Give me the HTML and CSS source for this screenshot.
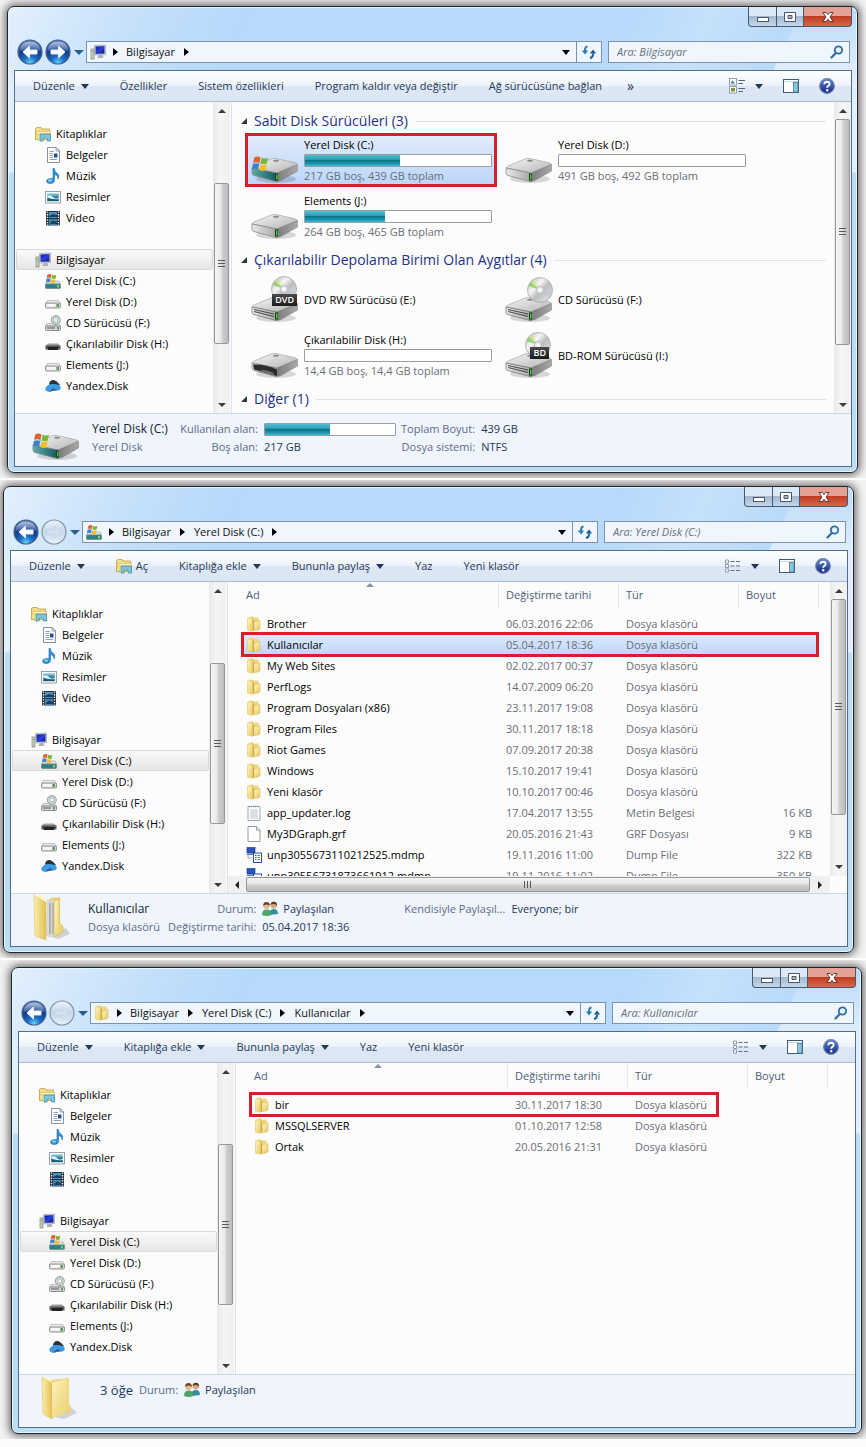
FILE: index.html
```html
<!DOCTYPE html>
<html lang="tr">
<head>
<meta charset="utf-8">
<meta name="viewport" content="width=device-width, initial-scale=1">
<title>Bilgisayar</title>
<link rel="stylesheet" href="styles.css">
</head>
<body>
<svg class="sprite" aria-hidden="true">
  <defs>
    <linearGradient id="g-top" x1="0" y1="0" x2="1" y2="1"><stop offset="0" stop-color="#f6f6f6"/><stop offset="1" stop-color="#b4b4b4"/></linearGradient>
    <linearGradient id="g-front" x1="0" y1="0" x2="1" y2="0"><stop offset="0" stop-color="#e9e9e9"/><stop offset="1" stop-color="#a5a5a5"/></linearGradient>
    <linearGradient id="g-teal" x1="0" y1="0" x2="1" y2="0"><stop offset="0" stop-color="#5fa9a8"/><stop offset="1" stop-color="#14585f"/></linearGradient>
    <linearGradient id="g-side" x1="0" y1="0" x2="1" y2="0"><stop offset="0" stop-color="#7b7b7b"/><stop offset="1" stop-color="#a9a9a9"/></linearGradient>
    <linearGradient id="g-disc" x1="0" y1="0" x2="1" y2="1"><stop offset="0" stop-color="#a9a9a9"/><stop offset=".35" stop-color="#f6f6f6"/><stop offset=".55" stop-color="#bdbdbd"/><stop offset="1" stop-color="#efefef"/></linearGradient>
    <linearGradient id="g-fold" x1="0" y1="0" x2="1" y2="0"><stop offset="0" stop-color="#fbeea9"/><stop offset="1" stop-color="#e2bf55"/></linearGradient>
    <linearGradient id="g-fold2" x1="0" y1="0" x2="1" y2="1"><stop offset="0" stop-color="#fff6c4"/><stop offset="1" stop-color="#e8c95f"/></linearGradient>
    <linearGradient id="g-screen" x1="0" y1="0" x2="1" y2="1"><stop offset="0" stop-color="#0717a6"/><stop offset=".5" stop-color="#2c41d8"/><stop offset="1" stop-color="#0a1378"/></linearGradient>
    <radialGradient id="g-ball" cx=".5" cy=".95" r=".9"><stop offset="0" stop-color="#5fd6ff"/><stop offset=".3" stop-color="#1f6fc4"/><stop offset=".65" stop-color="#143c8c"/><stop offset="1" stop-color="#4d74b5"/></radialGradient>
    <linearGradient id="g-shine" x1="0" y1="0" x2="0" y2="1"><stop offset="0" stop-color="#fff" stop-opacity=".85"/><stop offset="1" stop-color="#fff" stop-opacity=".15"/></linearGradient>
    <linearGradient id="g-pale" x1="0" y1="0" x2="0" y2="1"><stop offset="0" stop-color="#eef5fc"/><stop offset=".5" stop-color="#c3d5e8"/><stop offset="1" stop-color="#e8f3fc"/></linearGradient>
    <linearGradient id="g-help" x1="0" y1="0" x2="0" y2="1"><stop offset="0" stop-color="#5f84d6"/><stop offset="1" stop-color="#13277c"/></linearGradient>
    <linearGradient id="g-sea" x1="0" y1="0" x2="0" y2="1"><stop offset="0" stop-color="#9fd8ec"/><stop offset=".5" stop-color="#2a7f96"/><stop offset="1" stop-color="#175266"/></linearGradient>
  </defs>

  <symbol id="flag" viewBox="0 0 16 16">
    <path d="M2 2.500C4 1 6 1.300 8 2.300L7 7.500C5 6.500 3 6.400 1 7.500Z" fill="#e2622b"/>
    <path d="M9 2.600C11 3.600 13 3.600 15 2.600L14 8C12 9 10 8.800 8 7.800Z" fill="#7cb53c"/>
    <path d="M.8 8.500C3 7.400 5 7.500 6.800 8.500L5.800 13.600C4 12.600 2 12.600 0 13.700Z" fill="#3a82cf"/>
    <path d="M7.800 8.900C10 10 12 9.900 13.800 9L12.800 14.300C11 15.200 9 15 6.800 14Z" fill="#f3be2c"/>
  </symbol>
  <symbol id="drive-body" viewBox="0 0 48 26">
    <ellipse cx="25" cy="21" rx="20" ry="4" fill="#000" opacity=".15"/>
    <path d="M1 10Q1 9 3 8L20 1Q22 0 25 .5L45 5Q47 6 45 7.500L26 15Z" fill="url(#g-top)" stroke="#9b9b9b" stroke-width=".6"/>
    <path d="M26 15L46.500 6.500V13L30 22.500L26 23.500Z" fill="url(#g-side)" stroke="#777" stroke-width=".5"/>
    <ellipse cx="25" cy="2.800" rx="3" ry="1" fill="#888"/>
  </symbol>
  <symbol id="big-drive" viewBox="0 0 48 48">
    <use href="#drive-body" x="0" y="21" width="48" height="26"/>
    <path d="M1 31L26 36V44.500L23 44L3 38.500Q1 38 1 36Z" fill="url(#g-front)" stroke="#858585" stroke-width=".8"/>
    <rect x="24" y="36.500" width="3" height="7" fill="#123c12"/><rect x="25" y="37.500" width="1.500" height="5" fill="#4ccb3c"/>
  </symbol>
  <symbol id="big-os" viewBox="0 0 48 48">
    <use href="#drive-body" x="0" y="21" width="48" height="26"/>
    <path d="M1 31L26 36V44.500L23 44L3 38.500Q1 38 1 36Z" fill="url(#g-teal)" stroke="#858585" stroke-width=".8"/>
    <rect x="24" y="36.500" width="3" height="7" fill="#123c12"/><rect x="25" y="37.500" width="1.500" height="5" fill="#4ccb3c"/>
    <use href="#flag" x="1" y="18" width="17" height="17"/>
  </symbol>
  <symbol id="big-removable" viewBox="0 0 48 48">
    <use href="#drive-body" x="0" y="21" width="48" height="26"/>
    <path d="M1 31L26 36V44.500L23 44L3 38.500Q1 38 1 36Z" fill="url(#g-front)" stroke="#858585" stroke-width=".8"/>
    <path d="M2 32.500Q14 32 26 37.500V44L20 42.500L3 37.500Z" fill="#2c2c2c"/><path d="M8 38.500Q15 36.500 23 41.500V43L20 42.500Z" fill="#6d6d6d"/>
  </symbol>
  <symbol id="slot-drive" viewBox="0 0 48 48">
    <use href="#drive-body" x="0" y="21" width="48" height="26"/>
    <path d="M1 31L26 36V44.500L23 44L3 38.500Q1 38 1 36Z" fill="url(#g-front)" stroke="#757575" stroke-width=".8"/>
    <path d="M3 33.500L23 38M3 35.500L23 40.500" stroke="#444" stroke-width="1"/>
    <rect x="24" y="36.500" width="3" height="7" fill="#123c12"/><rect x="25" y="37.500" width="1.500" height="5" fill="#4ccb3c"/>
  </symbol>
  <symbol id="disc" viewBox="0 0 26 26">
    <circle cx="13" cy="13" r="12.500" fill="url(#g-disc)" stroke="#a0a0a0" stroke-width=".7"/>
    <path d="M13 13L1.500 9L4 5Z" fill="#7fd060" opacity=".8"/><path d="M13 13L4 5L7 2.500Z" fill="#cfe86a" opacity=".6"/>
    <path d="M13 13L24.500 16L22 21Z" fill="#b9c8df" opacity=".8"/>
    <circle cx="13" cy="13" r="3.600" fill="#e4e8ee" stroke="#aaa" stroke-width=".6"/><circle cx="13" cy="13" r="1.500" fill="#fff"/>
  </symbol>
  <symbol id="big-cd" viewBox="0 0 48 48">
    <use href="#slot-drive" width="48" height="48"/><use href="#disc" x="22" y="1" width="26" height="26"/>
  </symbol>
  <symbol id="big-disc" viewBox="0 0 48 48">
    <use href="#slot-drive" width="48" height="48"/><use href="#disc" x="20" y="0" width="26" height="26"/>
  </symbol>

  <symbol id="pc" viewBox="0 0 16 16">
    <rect x="1" y="5" width="3" height="10" fill="#c9ccb8" stroke="#83866f" stroke-width=".7"/><rect x="1.700" y="7" width="1.500" height="1" fill="#4c4"/>
    <path d="M4.500 1.500L15.500 1V10.500L4.500 11Z" fill="#d9dde2" stroke="#8d949e" stroke-width=".6"/>
    <path d="M5.500 2.500L14.500 2V9.500L5.500 10Z" fill="url(#g-screen)"/>
    <path d="M8.500 11H12.500L13.500 14H7.500Z" fill="#aab0b8"/>
  </symbol>
  <symbol id="library" viewBox="0 0 16 16">
    <path d="M.5 2.500L2 1.500H6L7 3H14.500V13.500H.5Z" fill="#f3dd88" stroke="#bf9a3c" stroke-width=".8"/>
    <path d="M2 5.500H15.500V8H2Z" fill="#fff3b9" stroke="#c9aa52" stroke-width=".5"/>
    <path d="M5 8H15.500V15H12.500Q12.500 11.500 10.200 11.500Q8 11.500 8 15H5Z" fill="#7fc4dd" stroke="#3d8aa8" stroke-width=".8"/>
    <path d="M4 9L5 8V15H3Z" fill="#b9d98a"/>
  </symbol>
  <symbol id="doc" viewBox="0 0 16 16">
    <path d="M2.500 .5H11L14.500 4V15.500H2.500Z" fill="#fff" stroke="#7d8794" stroke-width=".9"/>
    <path d="M11 .5V4H14.500Z" fill="#dfe6ee" stroke="#7d8794" stroke-width=".7"/>
    <path d="M4.500 4.500H9M4.500 6.500H8M4.500 8.500H8M4.500 10.500H8M4.500 12.500H12" stroke="#7d97b8" stroke-width=".9"/><rect x="9" y="6.500" width="3.500" height="4" fill="#274f92"/>
  </symbol>
  <symbol id="music" viewBox="0 0 16 16">
    <path d="M8 .5H9.500Q9.500 4 12 5Q15 7 13 11Q13.500 7.500 9.500 6.500V12Q9.500 15.500 5 15.500Q1.500 15.500 1.500 13Q2 10.500 5.500 10.500H8Z" fill="#2f94dc" stroke="#1768ad" stroke-width=".6"/><ellipse cx="5" cy="12.500" rx="2.200" ry="1.200" fill="#7cc6f4"/>
  </symbol>
  <symbol id="picture" viewBox="0 0 16 16">
    <rect x=".5" y="2.500" width="15" height="11.500" fill="#fff" stroke="#8c99a8" stroke-width=".9"/>
    <rect x="2.200" y="4.200" width="11.600" height="8" fill="url(#g-sea)"/><path d="M2.200 7Q5 5 8 8T13.800 8.500V10Q8 11 2.200 8.500Z" fill="#e0f4fa"/>
  </symbol>
  <symbol id="video" viewBox="0 0 16 16">
    <rect x="1" y="1" width="14" height="14.500" fill="#262f3b"/><rect x="4" y="2" width="8" height="6" fill="#4a94bf"/><rect x="4" y="9" width="8" height="6" fill="#3f83ae"/>
    <path d="M4 6L8 4L12 5V7H4ZM5 13L8 10.500L12 12V14H5Z" fill="#183f60"/>
    <path d="M2.500 1.500V15.500M13.500 1.500V15.500" stroke="#fff" stroke-width="1.400" stroke-dasharray="1.300 1.300"/>
  </symbol>
  <symbol id="drive" viewBox="0 0 16 16">
    <path d="M2.500 6.500H13.500L15.500 9.500H.5Z" fill="#ececec" stroke="#a0a0a0" stroke-width=".6"/>
    <rect x=".5" y="9" width="15" height="5" rx="1.200" fill="#dcdcdc" stroke="#7d7d7d" stroke-width=".8"/><rect x="2" y="10" width="8.500" height="2.800" fill="#f8f8f8"/><rect x="11.500" y="10" width="2.500" height="3" fill="#5d9a63"/>
  </symbol>
  <symbol id="os-drive" viewBox="0 0 16 16">
    <path d="M2.500 8H14L15.500 11H.5Z" fill="#e3e3e3" stroke="#9b9b9b" stroke-width=".6"/>
    <rect x=".5" y="11" width="15" height="4.500" rx="1" fill="#2f7f88" stroke="#6f8a8c" stroke-width=".8"/><rect x="12" y="12" width="2" height="2.500" fill="#7ad35c"/>
    <use href="#flag" x="1" y="0" width="11" height="11"/>
  </symbol>
  <symbol id="cd-drive" viewBox="0 0 16 16">
    <path d="M2 8.500H13.500L15.500 11H.5Z" fill="#e9e9e9" stroke="#9b9b9b" stroke-width=".6"/>
    <rect x=".5" y="11" width="15" height="4.500" rx="1" fill="#d8d8d8" stroke="#777" stroke-width=".8"/><path d="M2 13H10" stroke="#555"/><rect x="12" y="12" width="2" height="2.500" fill="#5d9a63"/>
    <circle cx="10.800" cy="5" r="4.500" fill="#d8dfdc" stroke="#8f9a96" stroke-width=".9"/><path d="M10.800 .5V9.500M8 2Q10 5 8 8.500M13.500 2Q11.500 5 13.500 8.500" stroke="#8fa59c" stroke-width=".7" fill="none"/><circle cx="10.800" cy="5" r="1.300" fill="#fff"/>
  </symbol>
  <symbol id="removable" viewBox="0 0 16 16">
    <path d="M3 7.500H13L15.500 10H.5Z" fill="#9d9d9d"/><path d="M.5 9.500H15.500V13.500H14L13 11.800H3L2 13.500H.5Z" fill="#555"/><rect x="2.500" y="11" width="11" height="3" fill="#222"/>
  </symbol>
  <symbol id="yandex" viewBox="0 0 16 16">
    <path d="M4 6Q5 1.500 9 2Q12 3 15 7L12 8.500L5 8Z" fill="#2a3138"/>
    <path d="M.5 10Q3 5.500 8 6Q15 6 15.700 9.500Q16 12 13 12.500Q11 9.500 7.500 10Q5 11.500 4.500 14Q-.5 13 .5 10Z" fill="#3c9be2"/>
    <path d="M4.500 14Q5 11 8 10Q11 9.500 13 12.500Q8 12 4.500 14Z" fill="#1b62a8"/>
  </symbol>
  <symbol id="folder" viewBox="0 0 16 16">
    <path d="M1.500 1L7 .5V14.500L1.500 13.500Z" fill="url(#g-fold)"/>
    <path d="M7 1.500H12.500V14.500H7Z" fill="#ecd57c"/><path d="M1.500 2.500L6.500 1.500V15.500L1.500 14Z" fill="url(#g-fold2)" stroke="#dfc468" stroke-width=".5"/>
    <path d="M7 2V14.800L8.200 14.500V6Z" fill="#c9a544"/>
    <path d="M8 6L14 4.500V13L8 14.500Z" fill="url(#g-fold2)" stroke="#d8b755" stroke-width=".5"/>
  </symbol>
  <symbol id="text-file" viewBox="0 0 16 16">
    <path d="M2 1.500H14V15.500H2Z" fill="#fff" stroke="#8ba0ae" stroke-width=".9"/><path d="M4 5H12M4 7H12M4 9H12M4 11H12M4 13H12" stroke="#a3b4be" stroke-width=".8"/><path d="M3 1.500H13" stroke="#8b9ea8" stroke-width="1.500" stroke-dasharray="1 1"/>
  </symbol>
  <symbol id="blank-file" viewBox="0 0 16 16">
    <path d="M2 .5H10.500L14 4V15.500H2Z" fill="#fff" stroke="#8f8f8f" stroke-width=".9"/><path d="M10.500 .5V4H14" fill="#eee" stroke="#8f8f8f" stroke-width=".8"/>
  </symbol>
  <symbol id="dump-file" viewBox="0 0 16 16">
    <rect x="1" y=".5" width="8" height="5.500" fill="#2b55b8" stroke="#163379" stroke-width=".6"/><path d="M0 8H9L8 6.500H2Z" fill="#5c7fbd"/><path d="M2 8.500V11H6" stroke="#456" fill="none" stroke-dasharray="1 1"/>
    <rect x="7.500" y="6" width="8" height="9.500" fill="#fff" stroke="#24519d" stroke-width="1"/><path d="M9 8.500H10.500M9 10.500H10.500M9 12.500H10.500" stroke="#24519d"/><path d="M11.500 8.500H14M11.500 10.500H14M11.500 12.500H14" stroke="#5e7ba8"/>
  </symbol>
  <symbol id="people" viewBox="0 0 16 16">
    <path d="M7.500 14Q7 8 11.500 8Q16 8 16 13Z" fill="#2f8f9d"/><circle cx="11.700" cy="4.500" r="3" fill="#dca77c"/><path d="M8.500 4Q9 .5 12 .8Q15.500 1 15 5Q14 3 12 3Q10 3 8.500 4Z" fill="#5b3a20"/>
    <path d="M0 14Q0 8.500 4.500 8.500Q9.500 8.500 9.500 14Q5 16 0 14Z" fill="#4ba66a"/><circle cx="4.500" cy="5" r="3.100" fill="#e8b88e"/><path d="M1.200 5Q1 1 4.500 1Q8 1 7.800 5Q6.500 3.400 4.500 3.400Q2.500 3.400 1.200 5Z" fill="#6a4426"/>
  </symbol>
  <symbol id="folder-full" viewBox="0 0 48 48">
    <path d="M22 42L38 34L42 40L30 45Z" fill="#000" opacity=".14"/>
    <path d="M22 4L32 3V40L20 43Z" fill="#ecd077"/><path d="M19 5L27 7V44L18 42Z" fill="#d8d8d4"/><path d="M22 9V40M25 9V40" stroke="#8b9099"/>
    <path d="M6 1L18 8V46L7 42Z" fill="url(#g-fold)" stroke="#ddc066" stroke-width=".6"/><path d="M6 1L16 3L18 8Z" fill="#fdf3bd"/>
    <path d="M26 8L31 5V29L35 32V38L26 43Z" fill="url(#g-fold2)" stroke="#d7b756" stroke-width=".6"/>
  </symbol>
  <symbol id="folder-open" viewBox="0 0 48 48">
    <path d="M18 42L36 33L41 38L28 44Z" fill="#000" opacity=".14"/>
    <path d="M14 5L33 3V28L16 44Z" fill="#eed684"/><path d="M6 2L16 8V44L7 39Z" fill="url(#g-fold)" stroke="#ddc066" stroke-width=".6"/>
    <path d="M6 2L14 4L16 8Z" fill="#fdf3bd"/><path d="M16 8L31 4L33 29L35 31V37L16 43Z" fill="url(#g-fold2)" opacity=".9"/>
  </symbol>

  <symbol id="ball-back" viewBox="0 0 26 26">
    <circle cx="13" cy="13" r="12" fill="url(#g-ball)" stroke="#44648f" stroke-width="1.200"/><path d="M2.500 11Q4 2.500 13 2.500T23.500 11Q13 15 2.500 11Z" fill="url(#g-shine)" opacity=".65"/>
    <path d="M6 13L12.500 7V11H20V15H12.500V19Z" fill="#fff" stroke="#dfeaf8" stroke-linejoin="round"/>
  </symbol>
  <symbol id="ball-forward" viewBox="0 0 26 26">
    <circle cx="13" cy="13" r="12" fill="url(#g-ball)" stroke="#44648f" stroke-width="1.200"/><path d="M2.500 11Q4 2.500 13 2.500T23.500 11Q13 15 2.500 11Z" fill="url(#g-shine)" opacity=".65"/>
    <path d="M20 13L13.500 7V11H6V15H13.500V19Z" fill="#fff" stroke="#dfeaf8" stroke-linejoin="round"/>
  </symbol>
  <symbol id="ball-off" viewBox="0 0 26 26">
    <circle cx="13" cy="13" r="12" fill="url(#g-pale)" stroke="#8594a8" stroke-width="1.200"/><path d="M20 13L13.500 7V11H6V15H13.500V19Z" fill="#d3e0ee" stroke="#c3d1e1" stroke-width=".6"/>
  </symbol>
  <symbol id="refresh" viewBox="0 0 16 16">
    <path d="M6.500 2.500Q3.800 3 4 7" stroke="#2f7fae" stroke-width="2" fill="none"/><path d="M.8 6.500H7.200L4 10.500Z" fill="#2f7fae"/>
    <path d="M9 14Q12.200 13.500 12 9.500" stroke="#1f5d94" stroke-width="2" fill="none"/><path d="M8.800 9.500H15.200L12 5.500Z" fill="#1f5d94"/>
  </symbol>
  <symbol id="search" viewBox="0 0 14 14">
    <circle cx="8.500" cy="5" r="3.700" fill="#e6f2fa" stroke="#2f6f9e" stroke-width="1.800"/><path d="M5.800 8L1.500 12.500" stroke="#2f6f9e" stroke-width="2.200" stroke-linecap="round"/>
  </symbol>
  <symbol id="help" viewBox="0 0 16 16">
    <circle cx="8" cy="8" r="7.400" fill="url(#g-help)" stroke="#7486ac" stroke-width="1.100"/>
    <path d="M5.400 6.200Q5.500 3.800 8 3.800Q10.600 3.900 10.600 6Q10.600 7.300 9.200 8Q8.200 8.600 8.200 9.800" stroke="#fff" stroke-width="1.900" fill="none"/><circle cx="8.200" cy="12.200" r="1.200" fill="#fff"/>
  </symbol>
  <symbol id="view-tiles" viewBox="0 0 16 16">
    <rect x=".5" y=".5" width="7" height="6.500" fill="#fff" stroke="#8797a5" stroke-width=".9"/><path d="M2 4.500L3.500 2.500L6 5.500H2Z" fill="#2f81a8"/>
    <rect x=".5" y="8.500" width="7" height="6.500" fill="#fff" stroke="#8797a5" stroke-width=".9"/><path d="M2 10H6V13.500H2Z" fill="#86913c"/>
    <path d="M9.500 2.500H16M9.500 5.500H14M9.500 10.500H16M9.500 13.500H14" stroke="#4c6585"/>
  </symbol>
  <symbol id="view-details" viewBox="0 0 16 16">
    <path d="M.5 2H3.500V5H.5ZM.5 6.500H3.500V9.500H.5ZM.5 11H3.500V14H.5Z" fill="#fff" stroke="#7c8fa8" stroke-width=".9"/>
    <path d="M5.500 3.500H9.500M11 3.500H15M5.500 8H9.500M11 8H15M5.500 12.500H9.500M11 12.500H15" stroke="#5d6f8b" stroke-width="1.100"/>
  </symbol>
  <symbol id="pane" viewBox="0 0 16 16">
    <rect x=".5" y="1.500" width="15" height="13" fill="#fff" stroke="#3d5a78"/><path d="M1 3.500H15" stroke="#c8d7e6"/><rect x="10.500" y="4.500" width="4.500" height="9.500" fill="#8cc6dd" stroke="#447d9c" stroke-width=".8"/>
  </symbol>
  <symbol id="win-min" viewBox="0 0 14 12"><rect x="1.500" y="6.500" width="11" height="4" fill="#fff" stroke="#4b5667"/></symbol>
  <symbol id="win-max" viewBox="0 0 14 12"><path d="M1.500 1.500H12.500V10.500H1.500ZM5 4.500H9V7.500H5Z" fill="#fff" fill-rule="evenodd" stroke="#4b5667"/></symbol>
  <symbol id="win-close" viewBox="0 0 14 12"><path d="M2 1.500H5.200L7 3.700L8.800 1.500H12L9 6L12 10.500H8.800L7 8.300L5.200 10.500H2L5 6Z" fill="#fff" stroke="#4b3038" stroke-width=".9"/></symbol>
</svg>

<section class="shot">
  <div class="window">
    <div class="caption">
      <button class="cap cap-min" aria-label="Simge durumuna küçült"><svg><use href="#win-min"/></svg></button>
      <button class="cap cap-max" aria-label="Ekranı kapla"><svg><use href="#win-max"/></svg></button>
      <button class="cap cap-close" aria-label="Kapat"><svg><use href="#win-close"/></svg></button>
    </div>
    <div class="nav">
      <div class="travel">
        <button class="ball" aria-label="Geri"><svg><use href="#ball-back"/></svg></button>
        <button class="ball" aria-label="İleri"><svg><use href="#ball-forward"/></svg></button>
        <button class="recent" aria-label="Son sayfalar"></button>
      </div>
      <div class="address">
        <div class="crumbs">
          <svg class="ico"><use href="#pc"/></svg><i class="tri"></i><a href="#">Bilgisayar</a><i class="tri"></i>
          <button class="drop" aria-label="Önceki konumlar"></button>
        </div>
        <button class="refresh" aria-label="Yenile"><svg class="ico"><use href="#refresh"/></svg></button>
      </div>
      <label class="search"><input type="text" aria-label="Ara" placeholder="Ara: Bilgisayar"><svg><use href="#search"/></svg></label>
    </div>
    <div class="client">
      <div class="toolbar">
        <button class="tool">Düzenle<i class="down"></i></button>
        <button class="tool">Özellikler</button>
        <button class="tool">Sistem özellikleri</button>
        <button class="tool">Program kaldır veya değiştir</button>
        <button class="tool">Ağ sürücüsüne bağlan</button>
        <button class="tool more">»</button>
        <div class="views">
          <button class="tool" aria-label="Görünüm"><svg class="ico"><use href="#view-tiles"/></svg><i class="down far"></i></button>
          <button class="tool" aria-label="Önizleme bölmesi"><svg class="ico"><use href="#pane"/></svg></button>
          <button class="tool" aria-label="Yardım"><svg class="ico"><use href="#help"/></svg></button>
        </div>
      </div>
      <div class="body">
        <nav class="tree">
          <div class="branch">
            <a class="node top" href="#"><svg class="ico"><use href="#library"/></svg>Kitaplıklar</a>
            <a class="node" href="#"><svg class="ico"><use href="#doc"/></svg>Belgeler</a>
            <a class="node" href="#"><svg class="ico"><use href="#music"/></svg>Müzik</a>
            <a class="node" href="#"><svg class="ico"><use href="#picture"/></svg>Resimler</a>
            <a class="node" href="#"><svg class="ico"><use href="#video"/></svg>Video</a>
          </div>
          <div class="branch">
            <a class="node top current" href="#"><svg class="ico"><use href="#pc"/></svg>Bilgisayar</a>
            <a class="node" href="#"><svg class="ico"><use href="#os-drive"/></svg>Yerel Disk (C:)</a>
            <a class="node" href="#"><svg class="ico"><use href="#drive"/></svg>Yerel Disk (D:)</a>
            <a class="node" href="#"><svg class="ico"><use href="#cd-drive"/></svg>CD Sürücüsü (F:)</a>
            <a class="node" href="#"><svg class="ico"><use href="#removable"/></svg>Çıkarılabilir Disk (H:)</a>
            <a class="node" href="#"><svg class="ico"><use href="#drive"/></svg>Elements (J:)</a>
            <a class="node" href="#"><svg class="ico"><use href="#yandex"/></svg>Yandex.Disk</a>
          </div>
        </nav>
        <div class="scroll tree-scroll"><i class="up"></i><span class="thumb"></span><i class="dn"></i></div>
        <main class="content">
          <div class="groups">
            <section class="group">
              <h2><i class="fold"></i>Sabit Disk Sürücüleri (3)</h2>
              <div class="tiles">
                <a class="tile picked" href="#"><svg class="big"><use href="#big-os"/></svg><span class="info"><span>Yerel Disk (C:)</span><progress max="100" value="51"></progress><small>217 GB boş, 439 GB toplam</small></span></a>
                <a class="tile" href="#"><svg class="big"><use href="#big-drive"/></svg><span class="info"><span>Yerel Disk (D:)</span><progress max="100" value="0"></progress><small>491 GB boş, 492 GB toplam</small></span></a>
                <a class="tile" href="#"><svg class="big"><use href="#big-drive"/></svg><span class="info"><span>Elements (J:)</span><progress max="100" value="43"></progress><small>264 GB boş, 465 GB toplam</small></span></a>
              </div>
            </section>
            <section class="group">
              <h2><i class="fold"></i>Çıkarılabilir Depolama Birimi Olan Aygıtlar (4)</h2>
              <div class="tiles">
                <a class="tile" href="#"><span class="stamped"><svg class="big"><use href="#big-disc"/></svg><b class="stamp">DVD</b></span><span class="info">DVD RW Sürücüsü (E:)</span></a>
                <a class="tile" href="#"><svg class="big"><use href="#big-cd"/></svg><span class="info">CD Sürücüsü (F:)</span></a>
                <a class="tile" href="#"><svg class="big"><use href="#big-removable"/></svg><span class="info"><span>Çıkarılabilir Disk (H:)</span><progress max="100" value="0"></progress><small>14,4 GB boş, 14,4 GB toplam</small></span></a>
                <a class="tile" href="#"><span class="stamped"><svg class="big"><use href="#big-disc"/></svg><b class="stamp stamp-bd">BD</b></span><span class="info">BD-ROM Sürücüsü (I:)</span></a>
              </div>
            </section>
            <section class="group"><h2><i class="fold"></i>Diğer (1)</h2></section>
          </div>
          <div class="scroll main-scroll"><i class="up"></i><span class="thumb"></span><i class="dn"></i></div>
        </main>
      </div>
      <footer class="details">
        <svg class="big"><use href="#big-os"/></svg>
        <div class="facts drive-facts">
          <strong>Yerel Disk (C:)</strong><span class="key">Kullanılan alan:</span><progress max="100" value="50"></progress><span class="key">Toplam Boyut:</span><span>439 GB</span>
          <span class="kind">Yerel Disk</span><span class="key">Boş alan:</span><span>217 GB</span><span class="key">Dosya sistemi:</span><span>NTFS</span>
        </div>
      </footer>
    </div>
  </div>
</section>

<section class="shot shot-left">
  <div class="window">
    <div class="caption">
      <button class="cap cap-min" aria-label="Simge durumuna küçült"><svg><use href="#win-min"/></svg></button>
      <button class="cap cap-max" aria-label="Ekranı kapla"><svg><use href="#win-max"/></svg></button>
      <button class="cap cap-close" aria-label="Kapat"><svg><use href="#win-close"/></svg></button>
    </div>
    <div class="nav">
      <div class="travel">
        <button class="ball" aria-label="Geri"><svg><use href="#ball-back"/></svg></button>
        <button class="ball" aria-label="İleri" disabled><svg><use href="#ball-off"/></svg></button>
        <button class="recent" aria-label="Son sayfalar"></button>
      </div>
      <div class="address">
        <div class="crumbs">
          <svg class="ico"><use href="#os-drive"/></svg><i class="tri"></i><a href="#">Bilgisayar</a><i class="tri"></i><a href="#">Yerel Disk (C:)</a><i class="tri"></i>
          <button class="drop" aria-label="Önceki konumlar"></button>
        </div>
        <button class="refresh" aria-label="Yenile"><svg class="ico"><use href="#refresh"/></svg></button>
      </div>
      <label class="search"><input type="text" aria-label="Ara" placeholder="Ara: Yerel Disk (C:)"><svg><use href="#search"/></svg></label>
    </div>
    <div class="client">
      <div class="toolbar">
        <button class="tool">Düzenle<i class="down"></i></button>
        <button class="tool"><svg class="ico"><use href="#library"/></svg>Aç</button>
        <button class="tool">Kitaplığa ekle<i class="down"></i></button>
        <button class="tool">Bununla paylaş<i class="down"></i></button>
        <button class="tool">Yaz</button>
        <button class="tool">Yeni klasör</button>
        <div class="views">
          <button class="tool" aria-label="Görünüm"><svg class="ico"><use href="#view-details"/></svg><i class="down far"></i></button>
          <button class="tool" aria-label="Önizleme bölmesi"><svg class="ico"><use href="#pane"/></svg></button>
          <button class="tool" aria-label="Yardım"><svg class="ico"><use href="#help"/></svg></button>
        </div>
      </div>
      <div class="body">
        <nav class="tree">
          <div class="branch">
            <a class="node top" href="#"><svg class="ico"><use href="#library"/></svg>Kitaplıklar</a>
            <a class="node" href="#"><svg class="ico"><use href="#doc"/></svg>Belgeler</a>
            <a class="node" href="#"><svg class="ico"><use href="#music"/></svg>Müzik</a>
            <a class="node" href="#"><svg class="ico"><use href="#picture"/></svg>Resimler</a>
            <a class="node" href="#"><svg class="ico"><use href="#video"/></svg>Video</a>
          </div>
          <div class="branch">
            <a class="node top" href="#"><svg class="ico"><use href="#pc"/></svg>Bilgisayar</a>
            <a class="node current" href="#"><svg class="ico"><use href="#os-drive"/></svg>Yerel Disk (C:)</a>
            <a class="node" href="#"><svg class="ico"><use href="#drive"/></svg>Yerel Disk (D:)</a>
            <a class="node" href="#"><svg class="ico"><use href="#cd-drive"/></svg>CD Sürücüsü (F:)</a>
            <a class="node" href="#"><svg class="ico"><use href="#removable"/></svg>Çıkarılabilir Disk (H:)</a>
            <a class="node" href="#"><svg class="ico"><use href="#drive"/></svg>Elements (J:)</a>
            <a class="node" href="#"><svg class="ico"><use href="#yandex"/></svg>Yandex.Disk</a>
          </div>
        </nav>
        <div class="scroll tree-scroll"><i class="up"></i><span class="thumb"></span><i class="dn"></i></div>
        <main class="content with-bars">
          <div class="listing">
            <table class="files">
              <colgroup><col class="c-name"><col class="c-date"><col class="c-type"><col class="c-size"></colgroup>
              <thead><tr><th class="sorted">Ad</th><th>Değiştirme tarihi</th><th>Tür</th><th>Boyut</th></tr></thead>
              <tbody>
                <tr><td><span class="file"><svg class="ico"><use href="#folder"/></svg>Brother</span></td><td>06.03.2016 22:06</td><td>Dosya klasörü</td><td></td></tr>
                <tr class="marked chosen"><td><span class="file"><svg class="ico"><use href="#folder"/></svg>Kullanıcılar</span></td><td>05.04.2017 18:36</td><td>Dosya klasörü</td><td></td></tr>
                <tr><td><span class="file"><svg class="ico"><use href="#folder"/></svg>My Web Sites</span></td><td>02.02.2017 00:37</td><td>Dosya klasörü</td><td></td></tr>
                <tr><td><span class="file"><svg class="ico"><use href="#folder"/></svg>PerfLogs</span></td><td>14.07.2009 06:20</td><td>Dosya klasörü</td><td></td></tr>
                <tr><td><span class="file"><svg class="ico"><use href="#folder"/></svg>Program Dosyaları (x86)</span></td><td>23.11.2017 19:08</td><td>Dosya klasörü</td><td></td></tr>
                <tr><td><span class="file"><svg class="ico"><use href="#folder"/></svg>Program Files</span></td><td>30.11.2017 18:18</td><td>Dosya klasörü</td><td></td></tr>
                <tr><td><span class="file"><svg class="ico"><use href="#folder"/></svg>Riot Games</span></td><td>07.09.2017 20:38</td><td>Dosya klasörü</td><td></td></tr>
                <tr><td><span class="file"><svg class="ico"><use href="#folder"/></svg>Windows</span></td><td>15.10.2017 19:41</td><td>Dosya klasörü</td><td></td></tr>
                <tr><td><span class="file"><svg class="ico"><use href="#folder"/></svg>Yeni klasör</span></td><td>10.10.2017 00:46</td><td>Dosya klasörü</td><td></td></tr>
                <tr><td><span class="file"><svg class="ico"><use href="#text-file"/></svg>app_updater.log</span></td><td>17.04.2017 13:55</td><td>Metin Belgesi</td><td>16 KB</td></tr>
                <tr><td><span class="file"><svg class="ico"><use href="#blank-file"/></svg>My3DGraph.grf</span></td><td>20.05.2016 21:43</td><td>GRF Dosyası</td><td>9 KB</td></tr>
                <tr><td><span class="file"><svg class="ico"><use href="#dump-file"/></svg>unp3055673110212525.mdmp</span></td><td>19.11.2016 11:00</td><td>Dump File</td><td>322 KB</td></tr>
                <tr><td><span class="file"><svg class="ico"><use href="#dump-file"/></svg>unp30556731873661912.mdmp</span></td><td>19.11.2016 11:02</td><td>Dump File</td><td>350 KB</td></tr>
              </tbody>
            </table>
          </div>
          <div class="scroll list-scroll"><i class="up"></i><span class="thumb"></span><i class="dn"></i></div>
          <div class="scroll across"><i class="lf"></i><span class="thumb"></span><i class="rt"></i></div>
        </main>
      </div>
      <footer class="details">
        <svg class="big"><use href="#folder-full"/></svg>
        <div class="facts folder-facts">
          <strong>Kullanıcılar</strong><span class="key">Durum:</span><span class="who"><svg class="ico"><use href="#people"/></svg>Paylaşılan</span><span class="key">Kendisiyle Paylaşıl...</span><span>Everyone; bir</span>
          <span class="kind">Dosya klasörü</span><span class="key">Değiştirme tarihi:</span><span>05.04.2017 18:36</span>
        </div>
      </footer>
    </div>
  </div>
</section>

<section class="shot shot-right">
  <div class="window">
    <div class="caption">
      <button class="cap cap-min" aria-label="Simge durumuna küçült"><svg><use href="#win-min"/></svg></button>
      <button class="cap cap-max" aria-label="Ekranı kapla"><svg><use href="#win-max"/></svg></button>
      <button class="cap cap-close" aria-label="Kapat"><svg><use href="#win-close"/></svg></button>
    </div>
    <div class="nav">
      <div class="travel">
        <button class="ball" aria-label="Geri"><svg><use href="#ball-back"/></svg></button>
        <button class="ball" aria-label="İleri" disabled><svg><use href="#ball-off"/></svg></button>
        <button class="recent" aria-label="Son sayfalar"></button>
      </div>
      <div class="address">
        <div class="crumbs">
          <svg class="ico"><use href="#folder"/></svg><i class="tri"></i><a href="#">Bilgisayar</a><i class="tri"></i><a href="#">Yerel Disk (C:)</a><i class="tri"></i><a href="#">Kullanıcılar</a><i class="tri"></i>
          <button class="drop" aria-label="Önceki konumlar"></button>
        </div>
        <button class="refresh" aria-label="Yenile"><svg class="ico"><use href="#refresh"/></svg></button>
      </div>
      <label class="search"><input type="text" aria-label="Ara" placeholder="Ara: Kullanıcılar"><svg><use href="#search"/></svg></label>
    </div>
    <div class="client">
      <div class="toolbar">
        <button class="tool">Düzenle<i class="down"></i></button>
        <button class="tool">Kitaplığa ekle<i class="down"></i></button>
        <button class="tool">Bununla paylaş<i class="down"></i></button>
        <button class="tool">Yaz</button>
        <button class="tool">Yeni klasör</button>
        <div class="views">
          <button class="tool" aria-label="Görünüm"><svg class="ico"><use href="#view-details"/></svg><i class="down far"></i></button>
          <button class="tool" aria-label="Önizleme bölmesi"><svg class="ico"><use href="#pane"/></svg></button>
          <button class="tool" aria-label="Yardım"><svg class="ico"><use href="#help"/></svg></button>
        </div>
      </div>
      <div class="body">
        <nav class="tree">
          <div class="branch">
            <a class="node top" href="#"><svg class="ico"><use href="#library"/></svg>Kitaplıklar</a>
            <a class="node" href="#"><svg class="ico"><use href="#doc"/></svg>Belgeler</a>
            <a class="node" href="#"><svg class="ico"><use href="#music"/></svg>Müzik</a>
            <a class="node" href="#"><svg class="ico"><use href="#picture"/></svg>Resimler</a>
            <a class="node" href="#"><svg class="ico"><use href="#video"/></svg>Video</a>
          </div>
          <div class="branch">
            <a class="node top" href="#"><svg class="ico"><use href="#pc"/></svg>Bilgisayar</a>
            <a class="node current" href="#"><svg class="ico"><use href="#os-drive"/></svg>Yerel Disk (C:)</a>
            <a class="node" href="#"><svg class="ico"><use href="#drive"/></svg>Yerel Disk (D:)</a>
            <a class="node" href="#"><svg class="ico"><use href="#cd-drive"/></svg>CD Sürücüsü (F:)</a>
            <a class="node" href="#"><svg class="ico"><use href="#removable"/></svg>Çıkarılabilir Disk (H:)</a>
            <a class="node" href="#"><svg class="ico"><use href="#drive"/></svg>Elements (J:)</a>
            <a class="node" href="#"><svg class="ico"><use href="#yandex"/></svg>Yandex.Disk</a>
          </div>
        </nav>
        <div class="scroll tree-scroll"><i class="up"></i><span class="thumb"></span><i class="dn"></i></div>
        <main class="content">
          <div class="listing roomy">
            <table class="files">
              <colgroup><col class="c-name"><col class="c-date"><col class="c-type"><col class="c-size"></colgroup>
              <thead><tr><th class="sorted">Ad</th><th>Değiştirme tarihi</th><th>Tür</th><th>Boyut</th></tr></thead>
              <tbody>
                <tr class="marked short"><td><span class="file"><svg class="ico"><use href="#folder"/></svg>bir</span></td><td>30.11.2017 18:30</td><td>Dosya klasörü</td><td></td></tr>
                <tr><td><span class="file"><svg class="ico"><use href="#folder"/></svg>MSSQLSERVER</span></td><td>01.10.2017 12:58</td><td>Dosya klasörü</td><td></td></tr>
                <tr><td><span class="file"><svg class="ico"><use href="#folder"/></svg>Ortak</span></td><td>20.05.2016 21:31</td><td>Dosya klasörü</td><td></td></tr>
              </tbody>
            </table>
          </div>
        </main>
      </div>
      <footer class="details">
        <svg class="big"><use href="#folder-open"/></svg>
        <div class="facts count-facts">
          <strong>3 öğe</strong><span class="key">Durum:</span><span class="who"><svg class="ico"><use href="#people"/></svg>Paylaşılan</span>
        </div>
      </footer>
    </div>
  </div>
</section>
</body>
</html>
```

FILE: styles.css
```css
* { box-sizing: border-box; }

body {
  margin: 0;
  background: #fcfcfc;
  color: #000;
  font: 11px/16px "Open Sans", "Noto Sans", sans-serif;
}

button, input { font: inherit; color: inherit; }
button { display: flex; align-items: center; justify-content: center; margin: 0; padding: 0; border: 0; background: none; }
a { color: inherit; text-decoration: none; }
svg { flex: none; }

.sprite { position: absolute; width: 0; height: 0; }
.ico { width: 16px; height: 16px; }
.big { display: block; width: 48px; height: 48px; }

/* A window with the strip of desktop around it */
.shot { overflow: hidden; margin-bottom: 2px; padding: 6px 8px 5px 7px; background: #f4f3f3; }
.shot-left { padding: 6px 12px 5px 3px; }
.shot-right { margin-bottom: 7px; padding: 7px 4px 5px 11px; }

.window {
  padding: 0 5px 5px 6px;
  border: 1px solid #182635;
  border-radius: 7px;
  background:
    linear-gradient(115deg, #e3f0fc 0, #c3dffa 130px, #b6d9fc 220px, #b6d9fc 560px, #c5e1fb 640px, #b9dafa 720px, transparent 721px) top / 100% 70px no-repeat,
    linear-gradient(#b9dafa 0, #e2effa 70px, #e2effa 165px, #bbdcf1 166px);
  box-shadow: inset 0 0 0 1px #e8f5ff, 0 0 9px 2px rgba(45, 40, 40, .7);
}

.caption { display: flex; justify-content: flex-end; }
.cap {
  height: 20px;
  border: 1px solid #47586c;
  border-top: 0;
  border-left-width: 0;
  background: linear-gradient(#dbe9f7 0 45%, #a2b5ca 46%, #c4d9ee);
}
.cap svg { width: 14px; height: 12px; }
.cap-min { width: 29px; border-left-width: 1px; border-radius: 0 0 0 4px; }
.cap-max { width: 27px; }
.cap-close { width: 48px; border-radius: 0 0 4px 0; background: linear-gradient(#e4a294 0 45%, #bd3b20 46%, #d8654a); }

.nav { display: flex; align-items: center; height: 36px; margin-top: 7px; padding: 0 2px; }
.travel { display: flex; align-items: center; width: 70px; }
.ball { width: 28px; height: 26px; }
.ball svg { width: 26px; height: 26px; }
.recent { width: 14px; }
.recent::before { content: ""; border: 5px solid transparent; border-top-color: #2b5f94; border-bottom: 0; }

.address { display: flex; flex: 1; height: 22px; border: 1px solid #7b93ae; background: #eff6fd; }
.crumbs { display: flex; flex: 1; align-items: center; padding-left: 3px; }
.crumbs a { color: #111; }
.tri { width: 0; margin: 0 9px; border: 4px solid transparent; border-left: 5px solid #000; border-right: 0; }
.crumbs .ico + .tri { margin: 0 8px 0 7px; }
.drop { margin-left: auto; width: 20px; }
.drop::before { content: ""; border: 4px solid transparent; border-top: 5px solid #000; border-bottom: 0; }
.refresh { width: 25px; border-left: 1px solid #7b93ae; }
.search { display: flex; align-items: center; width: 242px; height: 22px; margin-left: 6px; padding: 0 5px 0 8px; border: 1px solid #7b93ae; background: #eff6fd; }
.search input { flex: 1; min-width: 0; padding: 0; border: 0; outline: 0; background: none; font-style: italic; }
.search input::placeholder { color: #6c7076; opacity: 1; }
.search svg { width: 14px; height: 14px; }

.client { border: 1px solid #4e6d8f; background: #fcfcfc; }
.toolbar {
  display: flex;
  gap: 31px;
  height: 31px;
  padding: 0 16px 0 18px;
  border-bottom: 1px solid #a9bcd3;
  background: linear-gradient(#fdfeff 0, #edf3fb 48%, #dde7f4 52%, #dbe6f4);
}
.tool { gap: 4px; color: #1e395b; white-space: nowrap; }
.down { width: 0; margin-left: 2px; border: 4px solid transparent; border-top: 5px solid #1e395b; border-bottom: 0; }
.down.far { margin-left: 6px; }
.more { margin-left: -6px; font-size: 14px; }
.views { display: flex; gap: 20px; margin-left: auto; }

.body { display: flex; }
.tree { flex: 0 0 198px; padding: 21px 0 17px 1px; }
.branch + .branch { margin-top: 21px; }
.node { display: flex; align-items: center; gap: 5px; height: 21px; padding-left: 28px; border: 1px solid transparent; border-radius: 2px; white-space: nowrap; }
.node.top { padding-left: 18px; }
.node.current { border-color: #d9d9d9; background: linear-gradient(#fafafa, #e6e6e6); }

.scroll { display: grid; width: 17px; background: linear-gradient(90deg, #e9e9e9, #f5f5f5 40%, #f0f0f0); }
.scroll i { place-self: center; border: 4px solid transparent; }
.scroll .up { border-top: 0; border-bottom-color: #3c3c3c; }
.scroll .dn { border-bottom: 0; border-top-color: #3c3c3c; }
.scroll .lf { border-left: 0; border-right-color: #222; }
.scroll .rt { border-right: 0; border-left-color: #222; }
.thumb {
  display: grid;
  place-items: center;
  margin: 0 1px;
  border: 1px solid #979797;
  border-radius: 2px;
  background: linear-gradient(90deg, #f5f5f5, #e9e9eb 45%, #d0d0d3 55%, #bcbcbf);
}
.thumb::before { content: ""; width: 7px; height: 8px; background: repeating-linear-gradient(#5a5a5a 0 1px, transparent 1px 3px); }
.tree-scroll { grid-template-rows: 17px 64fr 161fr 52fr 17px; }
.tree-scroll .thumb { grid-row: 3; }
.tree-scroll .dn { grid-row: 5; }
.main-scroll { grid-template-rows: 17px 226fr 51fr 17px; }
.list-scroll { grid-template-rows: 17px 215fr 44fr 17px; }
.main-scroll .dn, .list-scroll .dn { grid-row: 4; }
.across { grid-column: 1; width: auto; height: 17px; grid-template-columns: 18px 1fr 20px; background: #f0f0f0; }
.across .thumb { margin: 1px 0; background: linear-gradient(#f5f5f5, #e4e4e6 45%, #cfcfd2 55%, #bcbcbf); }
.across .thumb::before { width: 8px; height: 7px; background: repeating-linear-gradient(90deg, #5a5a5a 0 1px, transparent 1px 3px); }

.content { display: flex; flex: 1; min-width: 0; margin-left: 1px; border-left: 1px solid #d9e2ee; }
.with-bars { display: grid; grid-template: 1fr 17px / 1fr 17px; }

/* Drive groups */
.groups { flex: 1; padding: 7px 8px 2px 9px; }
.group + .group { margin-top: 3px; }
.group h2 { display: flex; align-items: center; gap: 7px; height: 24px; margin: 0; color: #1e3287; font-size: 14px; font-weight: 400; }
.group h2::after { content: ""; flex: 1; height: 1px; background: #dfe3e8; }
.fold { width: 0; border-bottom: 6px solid #333; border-left: 6px solid transparent; }
.tiles { display: grid; grid-template-columns: repeat(auto-fill, 252px); gap: 2px; padding: 0 0 2px 4px; }
.tile { display: flex; align-items: center; gap: 5px; height: 54px; padding: 1px 0 0 3px; border: 3px solid transparent; }
.tile.picked { border-color: #d5202c; background: linear-gradient(#dfebfc, #bdd6fa); }
.info { display: grid; }
.info small { color: #6a6f76; font-size: 11px; }
.stamped { position: relative; }
.stamp {
  position: absolute;
  top: 18px;
  right: 2px;
  padding: 0 3px;
  background: linear-gradient(#4a4a4a, #1b1b1b);
  color: #fff;
  font-size: 9px;
  font-weight: 600;
  line-height: 12px;
}
.stamp-bd { top: 15px; right: 4px; }
progress {
  appearance: none;
  display: block;
  width: 188px;
  height: 13px;
  margin: 1px 0;
  border: 1px solid #9a9da1;
  border-radius: 1px;
  background: #fff;
}
progress::-webkit-progress-bar { background: #fff; }
progress::-webkit-progress-value { background: linear-gradient(#58bccd 0, #2ba2b8 40%, #0a7186 50%, #23a1b8 85%, #45b9cc); }

/* File table */
.listing { flex: 1; min-width: 0; overflow: hidden; contain: size; padding: 0 11px 0 13px; }
.roomy { padding-right: 27px; }
.files { width: 100%; border-collapse: separate; border-spacing: 0; table-layout: fixed; }
.c-date, .c-type { width: 120px; }
.c-size { width: 80px; }
.files th { height: 26px; padding: 0 0 0 7px; border-right: 1px solid #e2e8ef; color: #4c607a; font-weight: 400; text-align: left; }
.files th.sorted { position: relative; padding-left: 5px; }
.sorted::after { content: ""; position: absolute; top: 1px; left: 50%; margin-left: -4px; border: 4px solid transparent; border-top: 0; border-bottom-color: #7d95ab; }
.files tbody::before { content: ""; display: table-row; height: 5px; }
.files tbody tr { position: relative; }
.files td { height: 21px; padding: 0 0 0 7px; color: #6a6f76; white-space: nowrap; }
.files td:first-child { padding-left: 5px; color: #000; }
.files td:last-child { padding-right: 7px; text-align: right; }
.file { display: flex; align-items: center; gap: 5px; }
.chosen td { background: linear-gradient(#dfebfc, #bdd6fa); }
.marked td:first-child::after { content: ""; position: absolute; inset: -2px 0; border: 3px solid #d5202c; }
.short td:first-child::after { right: 109px; }

/* Details pane */
.details { display: flex; height: 53px; border-top: 1px solid #cbd8e8; background: #f0f4fc; }
.details > .big { margin: 0 12px 0 17px; }
.facts { display: grid; align-content: start; grid-auto-rows: 18px; align-items: center; gap: 0 6px; padding-top: 6px; color: #1e395b; white-space: nowrap; }
.facts strong { color: #111f33; font-size: 12px; font-weight: 400; }
.facts .key, .facts .kind { color: #5a6d88; }
.facts .key { text-align: right; }
.facts progress { width: 132px; }
.drive-facts { grid-template-columns: 80px 80px 131px auto auto; }
.folder-facts { grid-template-columns: 74px auto 136px auto auto; }
.count-facts { grid-template-columns: auto auto auto; padding-left: 4px; }
.count-facts strong { color: #1e395b; font-size: 13px; }
.who { display: flex; align-items: center; gap: 5px; }
```
